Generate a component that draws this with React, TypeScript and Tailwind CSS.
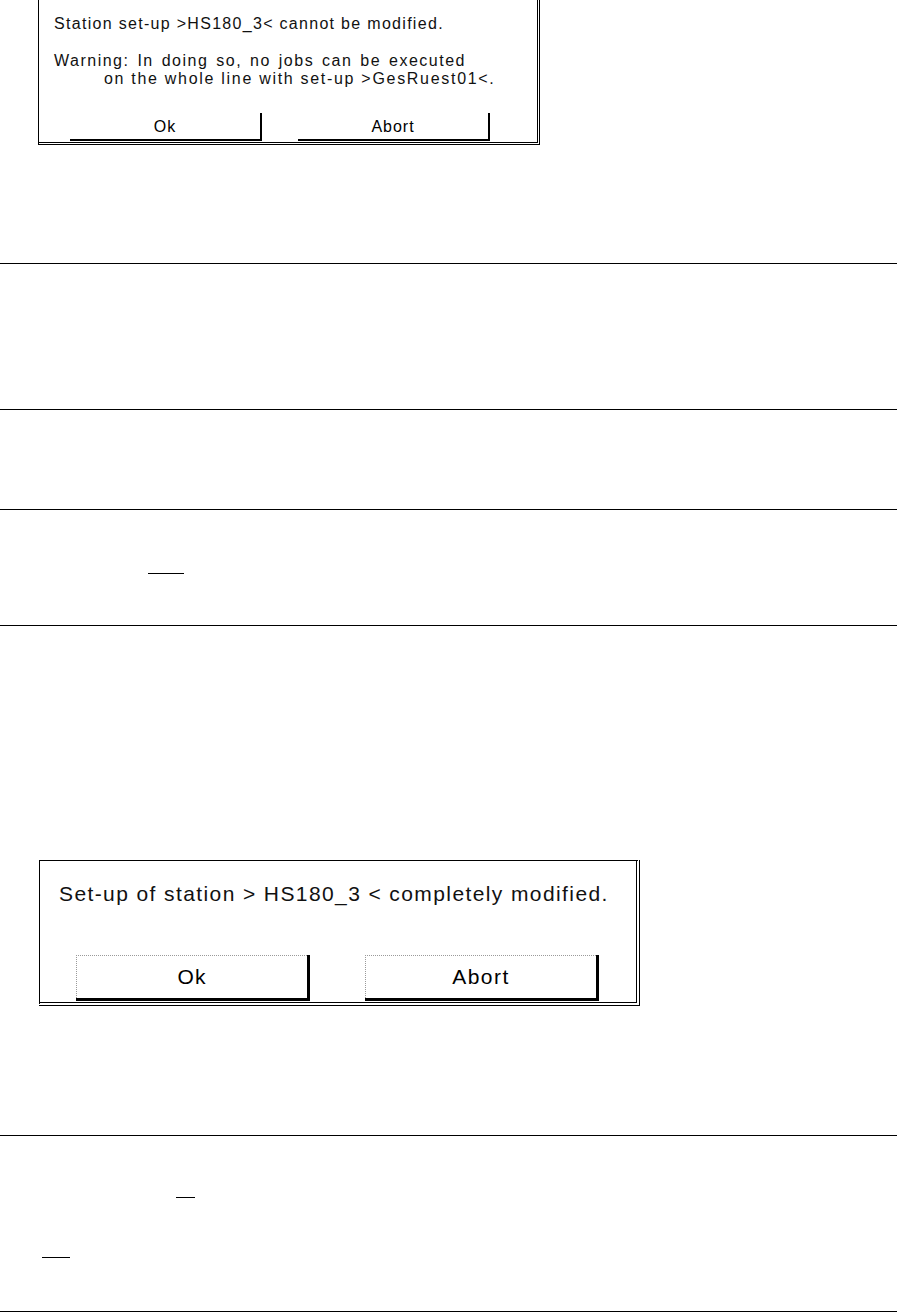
export default function App() {
  const font = { fontFamily: '"Liberation Sans", Arial, sans-serif' };
  return (
    <div className="w-[897px] h-[1312px] bg-white text-black overflow-hidden" style={font}>
      {/* first message box */}
      <div className="ml-[38px] w-[502px] h-[145px] border-l border-black border-r-[3px] border-b-[3px] border-double box-border">
        <div className="pl-[15px] pt-[15px] text-[16px] leading-[18px] text-[#111]">
          <p className="tracking-[1.3px]">Station set-up &gt;HS180_3&lt; cannot be modified.</p>
          <p className="mt-[19px] tracking-[1.5px] [word-spacing:2px]">Warning: In doing so, no jobs can be executed</p>
          <p className="pl-[50px] tracking-[1.7px]">on the whole line with set-up &gt;GesRuest01&lt;.</p>
        </div>
        <div className="flex mt-[25px] ml-[31px] gap-[36px]">
          <div className="w-[192px] h-[28px] border-r-2 border-b-2 border-black flex items-end justify-center pb-[3px] text-[16px] leading-[18px] tracking-[1px]">
            Ok
          </div>
          <div className="w-[192px] h-[28px] border-r-2 border-b-2 border-black flex items-end justify-center pb-[3px] text-[16px] leading-[18px] tracking-[1px]">
            Abort
          </div>
        </div>
      </div>

      <div className="mt-[118px] h-[146px] border-t border-black" />
      <div className="h-[100px] border-t border-black" />
      <div className="h-[116px] border-t border-black">
        <div className="mt-[63px] ml-[148px] w-[36px] h-px bg-black" />
      </div>
      <div className="h-[510px] border-t border-black">
        {/* second message box */}
        <div className="mt-[234px] ml-[39px] w-[601px] h-[146px] border-t border-l border-black border-r-[4px] border-b-[4px] border-double box-border">
          <p className="pl-[19px] pt-[21px] text-[21px] leading-[24px] tracking-[1.4px] text-[#111]">
            Set-up of station &gt; HS180_3 &lt; completely modified.
          </p>
          <div className="flex mt-[49px] ml-[36px] gap-[58px]">
            <div className="w-[231px] h-[43px] border-t border-l border-dotted border-[#9a9a9a] flex items-center justify-center text-[21px] leading-[24px] tracking-[1px] relative">
              <span>Ok</span>
              <div className="absolute -right-[3px] -top-px bottom-0 w-[3px] bg-black" />
              <div className="absolute -left-px -right-[3px] -bottom-[3px] h-[3px] bg-black" />
            </div>
            <div className="w-[231px] h-[43px] border-t border-l border-dotted border-[#9a9a9a] flex items-center justify-center text-[21px] leading-[24px] tracking-[1.5px] relative">
              <span>Abort</span>
              <div className="absolute -right-[3px] -top-px bottom-0 w-[3px] bg-black" />
              <div className="absolute -left-px -right-[3px] -bottom-[3px] h-[3px] bg-black" />
            </div>
          </div>
        </div>
      </div>
      <div className="h-[176px] border-t border-black">
        <div className="mt-[61px] ml-[176px] w-[19px] h-px bg-black" />
        <div className="mt-[59px] ml-[42px] w-[28px] h-px bg-black" />
      </div>
      <div className="h-px bg-black" />
    </div>
  );
}
